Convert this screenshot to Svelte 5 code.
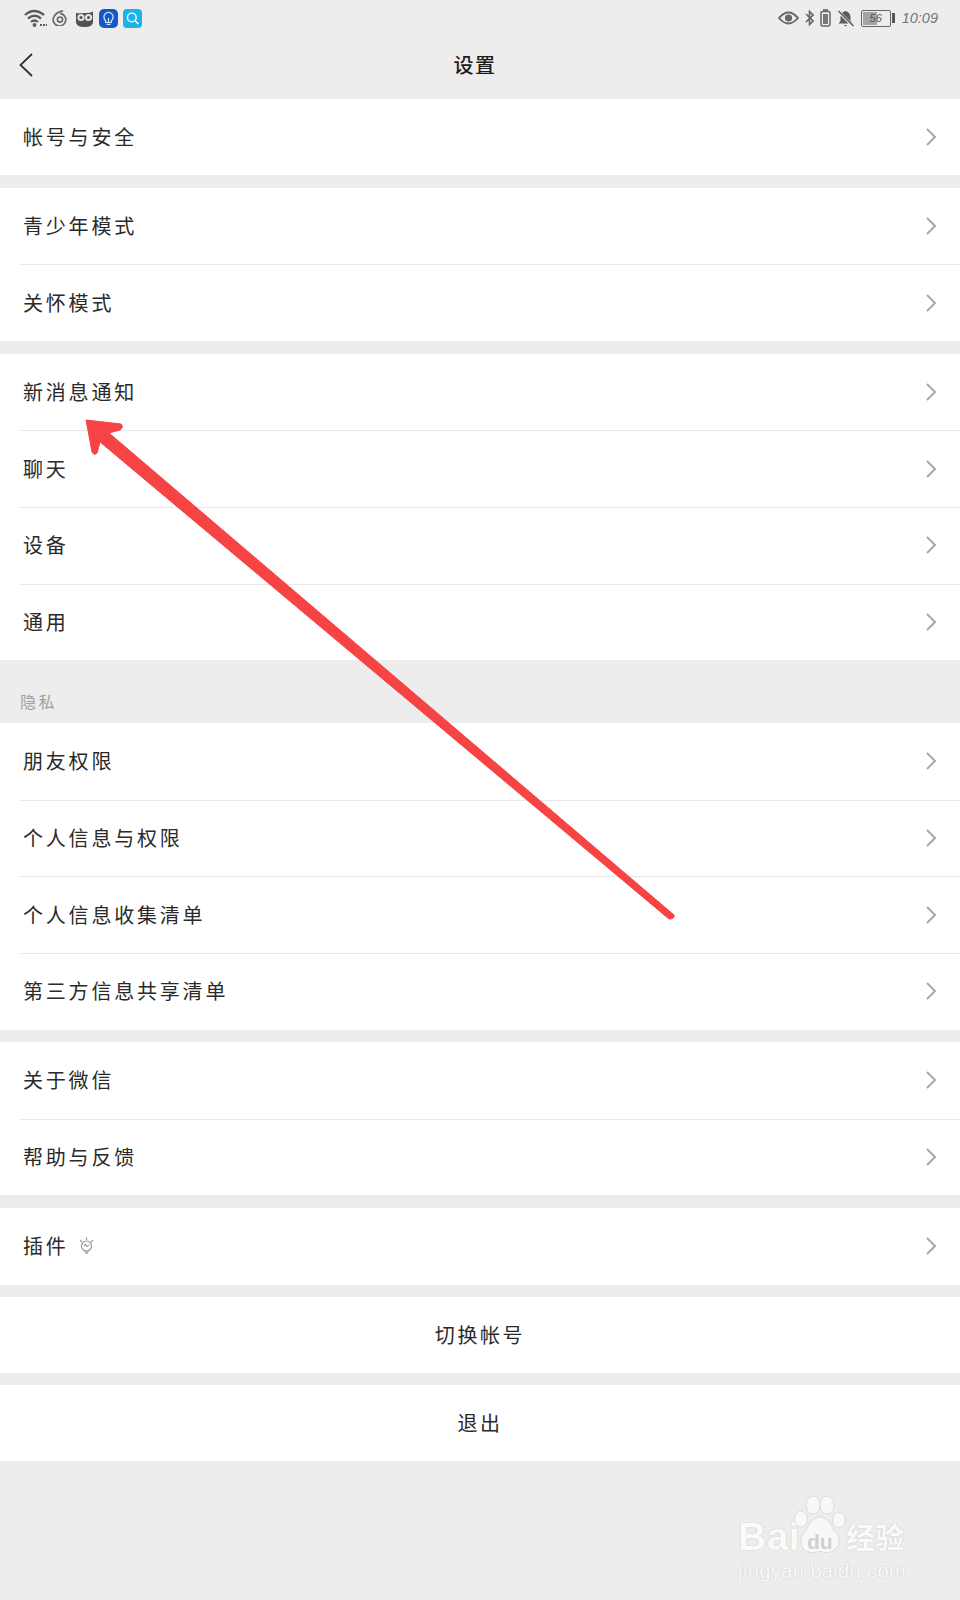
<script>
  const groups = [
    { items: ['帐号与安全'] },
    { items: ['青少年模式', '关怀模式'] },
    { items: ['新消息通知', '聊天', '设备', '通用'] },
    { label: '隐私', items: ['朋友权限', '个人信息与权限', '个人信息收集清单', '第三方信息共享清单'] },
    { items: ['关于微信', '帮助与反馈'] },
    { items: ['插件'], plugin: true }
  ];
  const buttons = ['切换帐号', '退出'];
</script>

<div class="screen">
  <header class="status">
    <div class="status-left">
      <svg class="wifi" viewBox="0 0 23 18" width="23" height="18" fill="none" stroke="#5a5a5a" stroke-width="2.3">
        <path d="M1 6 Q10 -2 20 6" /><path d="M4 9.5 Q10.5 4 17 9.5" /><path d="M7 13 Q10.5 10 14 13" />
        <circle cx="10.5" cy="16" r="1.9" fill="#5a5a5a" stroke="none" />
        <path d="M16 16h7" stroke-width="2" stroke-dasharray="2 1" />
      </svg>
      <svg viewBox="0 0 16 16" width="16" height="16" fill="none" stroke="#6a6a6a" stroke-width="1.7">
        <path d="M11 0.8 Q4 2 1.8 7 A6.3 6.3 0 1 0 8 3.4" /><circle cx="8" cy="9.6" r="2.6" />
      </svg>
      <svg class="owl" viewBox="0 0 19 17" width="19" height="17">
        <path d="M1 3 Q5 3.5 9.5 3 Q14 3.5 18 1.5 V12 Q18 17 9.5 17 Q1 17 1 12 Z" fill="#525252" />
        <circle cx="6" cy="7.5" r="3.6" fill="#e4e4e4" /><circle cx="13.5" cy="7.5" r="3.6" fill="#e4e4e4" />
        <circle cx="6" cy="7.5" r="1.5" fill="#525252" /><circle cx="13.5" cy="7.5" r="1.5" fill="#525252" />
      </svg>
      <svg viewBox="0 0 19 19" width="19" height="19" fill="none">
        <rect width="19" height="19" rx="5" fill="#1557c4" />
        <path d="M6.6 11.6 A4.6 4.6 0 1 1 12.4 11.6 V13.5 H6.6 Z" stroke="#cfe6ff" stroke-width="1.2" />
        <path d="M7.5 15.3 H11.5 M9.5 9 V13" stroke="#cfe6ff" stroke-width="1.2" />
      </svg>
      <svg viewBox="0 0 19 19" width="19" height="19" fill="none">
        <rect width="19" height="19" rx="4" fill="#1eb3e6" />
        <circle cx="8.8" cy="8.5" r="4.4" stroke="#fff" stroke-width="1.4" />
        <path d="M12 11.8 L15.5 15" stroke="#fff" stroke-width="1.5" />
      </svg>
    </div>
    <div class="status-right">
      <svg viewBox="0 0 21 14" width="21" height="14" fill="none">
        <path d="M1 7 Q10.5 -4 20 7 Q10.5 18 1 7 Z" stroke="#666" stroke-width="1.9" />
        <circle cx="10.5" cy="7" r="3.6" fill="#666" />
      </svg>
      <svg class="bt" viewBox="0 0 9 16" width="9" height="16" fill="none" stroke="#666" stroke-width="1.6">
        <path d="M1 4 L8 11 L4.5 14.5 V1.5 L8 5 L1 12" />
      </svg>
      <svg class="cell" viewBox="0 0 11 18" width="11" height="18" fill="none">
        <rect x="3" y="0" width="5" height="2" fill="#777" />
        <rect x="1" y="2.5" width="9" height="14.5" rx="1.4" stroke="#666" stroke-width="1.5" />
        <rect x="3" y="5" width="5" height="10" fill="#777" />
      </svg>
      <svg class="bell" viewBox="0 0 17 17" width="17" height="17">
        <path d="M8.5 1 Q13 2 13.5 7 V11 L15.5 13.5 H1.5 L3.5 11 V7 Q4 2 8.5 1 Z" fill="#5c5c5c" />
        <path d="M6.8 15 H10.2 L8.5 16.6 Z" fill="#5c5c5c" />
        <path d="M1 1 L16 16" stroke="#ececec" stroke-width="3" /><path d="M1.5 1 L16.5 16" stroke="#5c5c5c" stroke-width="1.5" />
      </svg>
      <div class="battery">
        <div class="battery-body"><span class="battery-fill"></span><span class="battery-num">56</span></div>
        <span class="battery-nub"></span>
      </div>
      <span class="time">10:09</span>
    </div>
  </header>

  <nav class="navbar">
    <svg class="back" viewBox="0 0 14 24" width="14" height="24" fill="none" stroke="#333" stroke-width="1.8">
      <path d="M13 1 L1.5 12 L13 23" />
    </svg>
    <h1>设置</h1>
  </nav>

  {#each groups as group}
    {#if group.label}<div class="label">{group.label}</div>{/if}
    <section class="group" class:gap={!group.label}>
      {#each group.items as item}
        <div class="row">
          <span class="row-text">{item}</span>
          {#if group.plugin}
            <svg class="bulb" viewBox="0 0 15 18" width="15" height="18" fill="none" stroke="#9a9a9a" stroke-width="1.2">
              <circle cx="7.5" cy="9" r="5" />
              <path d="M5 9 L6.5 7.5 L8 9.5 L10 8 M5.5 14 L7.5 16.5 L9.5 14 M1 3 L3 5 M14 3 L12 5 M7.5 0.5 V3" />
            </svg>
          {/if}
          <svg class="chevron" viewBox="0 0 10 18" width="10" height="18" fill="none" stroke="#a9a9a9" stroke-width="2">
            <path d="M1 1 L9 9 L1 17" />
          </svg>
        </div>
      {/each}
    </section>
  {/each}

  {#each buttons as b}
    <button class="action">{b}</button>
  {/each}

  <svg class="arrow" viewBox="0 0 960 1600" width="960" height="1600">
    <path d="M86 420 L121 424 Q124 427 120 430 L109 433 L674 915 Q675 919 669 919 L100 442 L97 453 Q94 456 92 452 Z" fill="#f64343" stroke="#f64343" stroke-width="1" stroke-linejoin="round" />
  </svg>

  <div class="mark">
    <div class="mark-top">
      <span class="bai">Bai</span>
      <svg class="paw" viewBox="0 0 52 62" width="52" height="62" fill="#f8f8f8" stroke="#d4d4d4" stroke-width="0.8">
        <ellipse cx="7" cy="23" rx="6.5" ry="8" />
        <ellipse cx="19" cy="9" rx="7" ry="9" />
        <ellipse cx="33" cy="9" rx="7" ry="9" />
        <ellipse cx="45" cy="24" rx="6.5" ry="8" />
        <path d="M26 21 Q34 21 39 33 Q50 42 42 53 Q34 59 26 55 Q16 59 9 53 Q3 42 13 33 Q18 21 26 21 Z" />
      </svg>
      <span class="du">du</span>
      <span class="jy">经验</span>
    </div>
    <div class="url">jingyan.baidu.com</div>
  </div>
</div>

<style>
  :global(body) {
    margin: 0;
  }
  .screen {
    position: relative;
    width: 960px;
    height: 1600px;
    overflow: hidden;
    background: #ededed;
    font-family: "Noto Sans CJK SC", "Noto Sans", sans-serif;
    color: #2a2a2a;
  }
  .status {
    height: 36px;
    display: flex;
    justify-content: space-between;
    align-items: center;
    padding: 0 22px 0 24px;
  }
  .status-left,
  .status-right {
    display: flex;
    align-items: center;
  }
  .status-left {
    gap: 5px;
  }
  .status-left .owl {
    margin-left: 2px;
  }
  .status-right {
    gap: 6px;
  }
  .battery {
    display: flex;
    align-items: center;
    gap: 1px;
    margin-left: 1px;
  }
  .battery-body {
    position: relative;
    width: 28px;
    height: 15px;
    border: 1.5px solid #666;
    border-radius: 2px;
    overflow: hidden;
  }
  .battery-fill {
    position: absolute;
    inset: 1px auto 1px 1px;
    width: 14px;
    background: #a4a4a4;
  }
  .battery-num {
    position: absolute;
    inset: 0;
    text-align: center;
    font: italic 11px/15px "Liberation Sans", sans-serif;
    color: #555;
  }
  .battery-nub {
    width: 3px;
    height: 10px;
    background: #555;
  }
  .time {
    margin-left: 1px;
    font: italic 300 14.5px/18px "Liberation Sans", sans-serif;
    color: #777;
  }
  .navbar {
    position: relative;
    height: 62.5px;
    display: flex;
    align-items: center;
    justify-content: center;
  }
  .back {
    position: absolute;
    left: 19px;
    top: 17px;
  }
  h1 {
    margin: 0 10px 6px 0;
    font-size: 20px;
    font-weight: 500;
    letter-spacing: 1.5px;
    color: #1c1c1c;
  }
  .group {
    background: #fff;
  }
  .group.gap:not(:first-of-type) {
    margin-top: 12.5px;
  }
  .label {
    height: 62.5px;
    box-sizing: border-box;
    padding: 31px 0 0 20px;
    font-size: 16px;
    line-height: 20px;
    letter-spacing: 2.5px;
    color: #a0a0a0;
  }
  .row {
    height: 76.7px;
    display: flex;
    align-items: center;
    position: relative;
    box-sizing: border-box;
    padding: 0 24px 0 23px;
  }
  .row + .row::before {
    content: "";
    position: absolute;
    left: 20px;
    right: 0;
    top: 0;
    height: 1px;
    background: #e8e8e8;
  }
  .row-text {
    font-size: 20px;
    line-height: 28px;
    letter-spacing: 2.8px;
    font-weight: 400;
  }
  .bulb {
    margin-left: 10px;
  }
  .chevron {
    margin-left: auto;
  }
  .action {
    display: block;
    width: 100%;
    height: 75.5px;
    margin: 12.5px 0 0;
    padding: 0;
    border: 0;
    background: #fff;
    font: inherit;
    font-size: 20px;
    letter-spacing: 2.6px;
    color: #2a2a2a;
  }
  .arrow {
    position: absolute;
    left: 0;
    top: 0;
    pointer-events: none;
  }
  .mark {
    position: absolute;
    left: 738px;
    top: 1496px;
    width: 175px;
    color: #fafafa;
  }
  .mark-top {
    position: relative;
    height: 62px;
  }
  .bai {
    position: absolute;
    left: 0;
    top: 19px;
    font: 700 39px/44px "Liberation Sans", sans-serif;
    letter-spacing: 0.5px;
    text-shadow: 0 0 1.5px #bdbdbd;
  }
  .paw {
    position: absolute;
    left: 56px;
    top: 0;
  }
  .du {
    position: absolute;
    left: 69px;
    top: 34px;
    font: 700 21px/24px "Liberation Sans", sans-serif;
    color: #d0d0d0;
  }
  .jy {
    position: absolute;
    left: 108px;
    top: 22px;
    font-size: 29px;
    line-height: 36px;
    font-weight: 700;
    text-shadow: 0 0 1.5px #bdbdbd;
  }
  .url {
    margin-top: 2px;
    font: 400 20px/22px "Liberation Sans", sans-serif;
    letter-spacing: 0.4px;
    white-space: nowrap;
    text-shadow: 0 0 1.5px #bdbdbd;
  }
</style>
